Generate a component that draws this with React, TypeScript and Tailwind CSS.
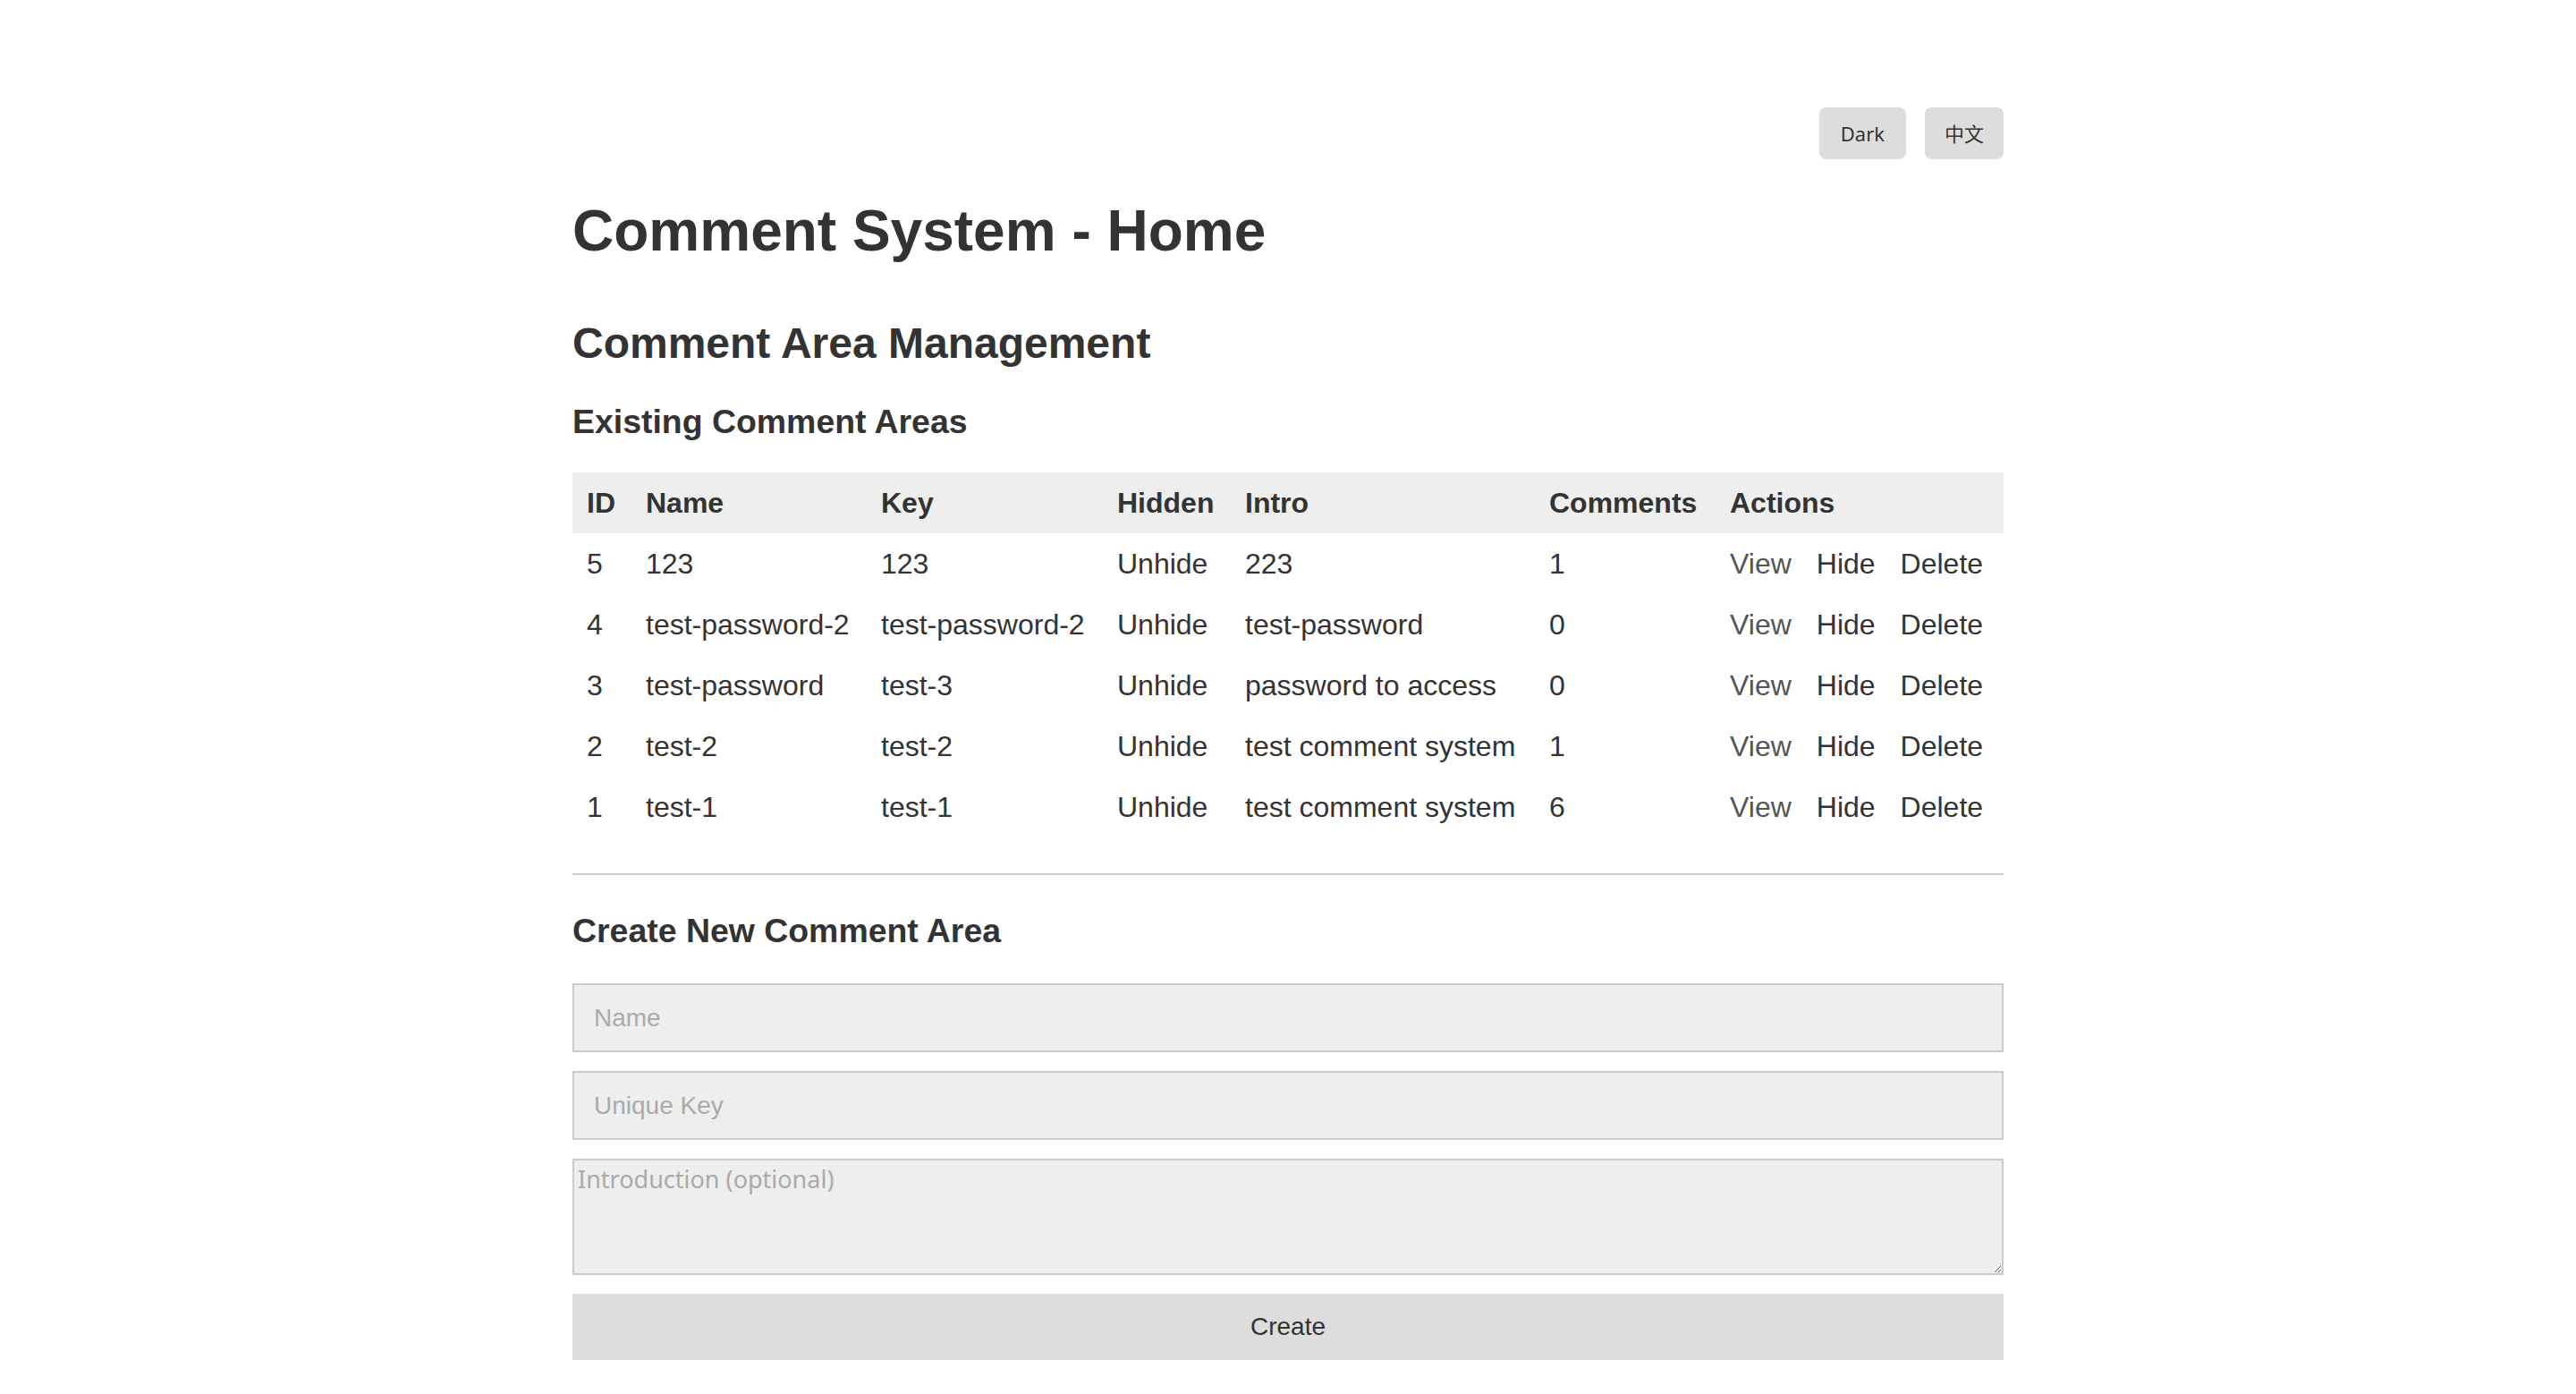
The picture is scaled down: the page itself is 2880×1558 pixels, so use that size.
const areas = [
  { id: 5, name: "123", key: "123", intro: "223", comments: 1 },
  { id: 4, name: "test-password-2", key: "test-password-2", intro: "test-password", comments: 0 },
  { id: 3, name: "test-password", key: "test-3", intro: "password to access", comments: 0 },
  { id: 2, name: "test-2", key: "test-2", intro: "test comment system", comments: 1 },
  { id: 1, name: "test-1", key: "test-1", intro: "test comment system", comments: 6 },
];

const columns = [
  { label: "ID", width: "w-[66px]" },
  { label: "Name", width: "w-[263px]" },
  { label: "Key", width: "w-[264px]" },
  { label: "Hidden", width: "w-[143px]" },
  { label: "Intro", width: "w-[340px]" },
  { label: "Comments", width: "w-[202px]" },
  { label: "Actions", width: "w-[322px]" },
];

const cell = "px-[16px] py-[16px] leading-[36px] whitespace-nowrap";

export default function App() {
  return (
    <div className="min-h-screen bg-white text-[#333] font-['Liberation_Sans',Arial,sans-serif]">
      <div className="mx-auto w-[1600px] pt-[120px] pb-[24px]">
        {/* top-right toggles */}
        <div className="flex justify-end gap-[21px]">
          <button className="h-[58px] rounded-[8px] bg-[#ddd] px-[24px] text-[22px] text-[#333] font-['Noto_Sans',sans-serif]">
            Dark
          </button>
          <button className="h-[58px] rounded-[8px] bg-[#ddd] px-[22px] text-[22px] text-[#333] font-['Noto_Sans','Noto_Sans_CJK_SC',sans-serif]">
            中文
          </button>
        </div>

        <h1 className="mt-[43px] text-[64px] font-bold leading-[74px]">Comment System - Home</h1>
        <h2 className="mt-[61px] text-[48px] font-bold leading-[55px]">Comment Area Management</h2>
        <h3 className="mt-[39px] text-[37.44px] font-bold leading-[43px]">Existing Comment Areas</h3>

        <table className="mt-[35px] w-full table-fixed border-collapse text-left text-[32px]">
          <thead>
            <tr className="bg-[#eee]">
              {columns.map((c) => (
                <th key={c.label} className={`${cell} ${c.width} font-bold`}>
                  {c.label}
                </th>
              ))}
            </tr>
          </thead>
          <tbody>
            {areas.map((a) => (
              <tr key={a.id}>
                <td className={cell}>{a.id}</td>
                <td className={cell}>{a.name}</td>
                <td className={cell}>{a.key}</td>
                <td className={cell}>Unhide</td>
                <td className={cell}>{a.intro}</td>
                <td className={cell}>{a.comments}</td>
                <td className={cell}>
                  <div className="flex gap-[28px]">
                    <a className="text-[#555] cursor-pointer">View</a>
                    <button className="cursor-pointer">Hide</button>
                    <button className="cursor-pointer">Delete</button>
                  </div>
                </td>
              </tr>
            ))}
          </tbody>
        </table>

        <hr className="mt-[40px] border-t-2 border-[#ccc]" />

        <h3 className="mt-[41px] text-[37.44px] font-bold leading-[43px]">Create New Comment Area</h3>

        <div className="mt-[37px] flex flex-col gap-[21px]">
          <input
            placeholder="Name"
            className="h-[77px] w-full border-2 border-[#ccc] bg-[#eee] px-[22px] text-[28px] placeholder:text-[#aaa] outline-none"
          />
          <input
            placeholder="Unique Key"
            className="h-[77px] w-full border-2 border-[#ccc] bg-[#eee] px-[22px] text-[28px] placeholder:text-[#aaa] outline-none"
          />
          <textarea
            placeholder="Introduction (optional)"
            className="block h-[130px] w-full border-2 border-[#ccc] bg-[#eee] px-[4px] py-[2px] text-[27px] leading-[38px] font-['Noto_Sans',sans-serif] placeholder:text-[#aaa] outline-none"
          />
          <button className="h-[74px] w-full bg-[#ddd] text-[28px] text-[#333]">Create</button>
        </div>
      </div>
    </div>
  );
}
